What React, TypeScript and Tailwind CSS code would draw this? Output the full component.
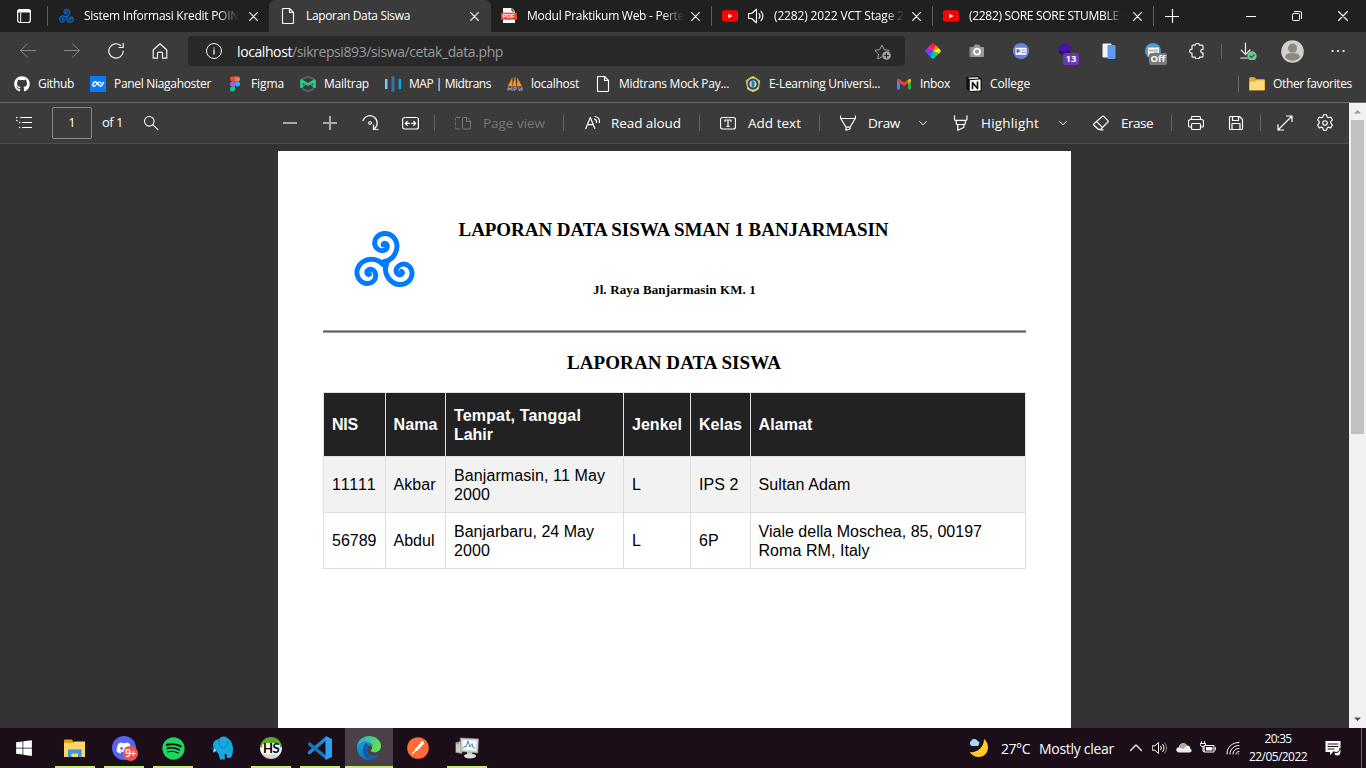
import { useLayoutEffect, useRef } from "react";
import type { ReactNode } from "react";
import { FaGithub, FaWindows, FaSpotify, FaDiscord } from "react-icons/fa";
import { SiPostman } from "react-icons/si";

/* Text that spreads its letters to fill the width given by its class. */
function Fit({ className = "", children }: { className?: string; children: string }) {
  const outer = useRef<HTMLSpanElement>(null);
  const inner = useRef<HTMLSpanElement>(null);
  useLayoutEffect(() => {
    if (!outer.current || !inner.current) return;
    inner.current.style.letterSpacing = "0px";
    const gap = outer.current.getBoundingClientRect().width - inner.current.getBoundingClientRect().width;
    inner.current.style.letterSpacing = `${gap / children.length}px`;
  }, [children]);
  return (
    <span ref={outer} className={`block shrink-0 whitespace-nowrap ${className}`}>
      <span ref={inner} className="inline-block">{children}</span>
    </span>
  );
}

function Icon({ className = "", box = "0 0 16 16", children }: { className?: string; box?: string; children: ReactNode }) {
  return (
    <svg viewBox={box} fill="none" stroke="currentColor" strokeWidth="1" strokeLinecap="round" strokeLinejoin="round" className={`block shrink-0 ${className}`}>
      {children}
    </svg>
  );
}

function Triskelion({ className = "" }: { className?: string }) {
  const arm = "M99 54C99 46 112 48 112 59C111 71 98 73 90 70C73 64 69 45 80 31C91 16 115 16 128 28C146 45 145 71 129 90C122 98 114 102 104 104";
  return (
    <Icon box="12 12 183 172" className={className}>
      <g stroke="#007bff" strokeWidth="15">
        <path d={arm} />
        <path d={arm} transform="rotate(120 104 110)" />
        <path d={arm} transform="rotate(240 104 110)" />
        <path d="M126 95Q112 114 106 137Q98 112 80 98Q105 102 126 95Z" fill="#007bff" strokeWidth="1" />
      </g>
    </Icon>
  );
}

const FileIcon = ({ className = "h-4 w-4" }: { className?: string }) => (
  <Icon className={className}>
    <path d="M2.5 1.5a1 1 0 0 1 1-1H9.500l4 4v10a1 1 0 0 1-1 1h-9a1 1 0 0 1-1-1ZM9.500.5v4h4" strokeWidth="1.15" />
  </Icon>
);

const Close = ({ className = "" }: { className?: string }) => (
  <Icon className={`h-[9px] w-[9px] ${className}`} box="0 0 9 9"><path d="M.7.7l7.600 7.600M8.300.7L.7 8.300" strokeWidth="1.2" /></Icon>
);

const Youtube = () => (
  <Icon className="h-4 w-4">
    <rect x="0" y="2.300" width="16" height="11.500" rx="2.800" fill="#f00" stroke="none" />
    <path d="M6.300 5.700v4.600L10.500 8Z" fill="#fff" stroke="none" />
  </Icon>
);

const Chevron = ({ className = "" }: { className?: string }) => (
  <Icon className={`h-2 w-2 ${className}`} box="0 0 8 8"><path d="M.7 2.500L4 5.800 7.300 2.500" /></Icon>
);

const Rule = ({ className = "" }: { className?: string }) => <span className={`block w-px shrink-0 ${className}`} />;

const fade = "overflow-hidden [mask-image:linear-gradient(to_right,black_86%,transparent)]";

function TabStrip() {
  return (
    <div className="flex h-8 bg-[#202020] text-[12px] leading-8 text-white">
      <div className="flex w-[269px] items-center rounded-br-md">
        <Icon className="ml-4 h-4 w-4"><rect x="1.700" y="1.700" width="12.600" height="12.800" rx="2" strokeWidth="1.200" /><path d="M2 3.700h12M2.300 2.700h11.500" strokeWidth="1.700" /><path d="M4.700 5v9" /></Icon>
        <Rule className="ml-[15px] h-5 bg-[#5c5c5c]" />
        <Triskelion className="ml-[11px] h-[14px] w-[15px] opacity-85" />
        <Fit className={`ml-[10px] w-[155px] ${fade}`}>Sistem Informasi Kredit POIN</Fit>
        <Close className="ml-[10px]" />
      </div>
      <div className="flex w-[222px] items-center rounded-t-md bg-[#3b3b3b]">
        <FileIcon className="ml-[11px] h-4 w-4" />
        <Fit className="ml-[10px] w-[104px]">Laporan Data Siswa</Fit>
        <Close className="ml-[60px]" />
      </div>
      <div className="flex w-[220px] items-center">
        <Icon className="ml-[10px] h-4 w-4">
          <path d="M2 0h9l3 3v12H2Z" fill="#fff" stroke="none" />
          <path d="M11 0v3h3" stroke="#222" />
          <rect x="0" y="4.700" width="16" height="7" fill="#f53b3b" stroke="none" />
          <text x="1.700" y="10.400" fill="#fff" stroke="none" fontSize="6" fontWeight="700" fontFamily="Liberation Sans, sans-serif">PDF</text>
        </Icon>
        <Fit className={`ml-[10px] w-[157px] ${fade}`}>Modul Praktikum Web - Perte</Fit>
        <Close className="ml-[7px]" />
      </div>
      <div className="flex w-[221px] items-center">
        <Rule className="h-5 bg-[#5c5c5c]" />
        <span className="ml-[10px]"><Youtube /></span>
        <Icon className="ml-[10px] h-4 w-4"><path d="M.6 5.500h3L8.500 1.300v13.400l-4.900-4.200h-3ZM11 5.500a4 4 0 0 1 0 5M13 3.300a7 7 0 0 1 0 9.400" strokeWidth="1.150" /></Icon>
        <Fit className={`ml-[10px] w-[130px] ${fade}`}>(2282) 2022 VCT Stage 2</Fit>
        <Close className="ml-[8px]" />
      </div>
      <div className="flex w-[221px] items-center">
        <Rule className="h-5 bg-[#5c5c5c]" />
        <span className="ml-[10px]"><Youtube /></span>
        <Fit className="ml-[10px] w-[161px] overflow-hidden [mask-image:linear-gradient(to_right,black_84%,transparent_96%)]">(2282) SORE SORE STUMBLE G</Fit>
        <Close className="ml-[3px]" />
      </div>
      <div className="flex flex-1 items-center">
        <Rule className="h-5 bg-[#5c5c5c]" />
        <Icon className="ml-[11px] h-[14px] w-[14px]" box="0 0 14 14"><path d="M7.500 0v14M0 7.500h14" strokeWidth="1.200" /></Icon>
        <Icon className="ml-[67px] h-[10px] w-[10px]" box="0 0 10 10"><path d="M0 5.500h10" strokeLinecap="butt" /></Icon>
        <Icon className="ml-[36px] h-[10px] w-[10px]" box="0 0 10 10"><rect x=".5" y="2.500" width="7" height="7" rx="1" /><path d="M2.500.5H8a1.500 1.500 0 0 1 1.500 1.500v5.500" /></Icon>
        <Icon className="ml-[36px] h-[10px] w-[10px]" box="0 0 10 10"><path d="M.5.5l9 9M9.500.5l-9 9" strokeWidth="1.200" /></Icon>
      </div>
    </div>
  );
}

const Cell = ({ children, className = "" }: { children: ReactNode; className?: string }) => (
  <span className={`flex w-11 shrink-0 items-center justify-center ${className}`}>{children}</span>
);

function AddressRow() {
  const wheel = ["#f22", "#f90", "#ee2", "#3d3", "#0cc", "#27f", "#83f", "#f2b"];
  return (
    <div className="flex h-[38px] items-center pl-[6px] text-[#f2f2f2]">
      <Cell className="text-[#858585]"><Icon className="h-4 w-4"><path d="M.5 7.500h15.500M7.500.8L.5 7.500l7 6.700" /></Icon></Cell>
      <Cell className="text-[#858585]"><Icon className="h-4 w-4"><path d="M0 7.500h15.500M8.500.8L15.500 7.500l-7 6.700" /></Icon></Cell>
      <Cell><Icon className="h-4 w-4"><path d="M15.200 8A7.200 7.200 0 1 1 12.700 2.500M15.200.3v4.200h-4.200" strokeWidth="1.200" /></Icon></Cell>
      <Cell><Icon className="h-4 w-4"><path d="M1.200 7L8 .8 14.800 7v8.200h-4.300v-5a1 1 0 0 0-1-1h-3a1 1 0 0 0-1 1v5H1.200Z" strokeWidth="1.200" /></Icon></Cell>
      <div className="ml-[6px] flex h-[30px] w-[717px] items-center rounded bg-[#292929]">
        <Icon className="ml-[18px] h-4 w-4"><circle cx="8" cy="8" r="7.500" /><path d="M8 7v4M8 4.900v.1" strokeWidth="1.300" /></Icon>
        <Fit className="ml-[15px] w-[55px] text-[14px] text-white">localhost</Fit>
        <Fit className="w-[211px] text-[14px] text-[#9a9a9a]">/sikrepsi893/siswa/cetak_data.php</Fit>
        <Icon className="ml-[371px] h-[17px] w-[17px] text-[#a0a0a0]" box="0 0 17 17"><path d="M7.500 14L3.700 16l.8-5L.8 7.400l4.900-.8L8 2l2.200 4.600 5 .8-1 1" /><circle cx="12.500" cy="12.500" r="4.300" fill="#a0a0a0" stroke="none" /><path d="M12.500 10.500v4M10.500 12.500h4" stroke="#292929" strokeWidth="1.200" /></Icon>
      </div>
      <Cell className="ml-[6px]">
        <Icon className="h-4 w-4">
          {wheel.map((c, i) => <path key={c} d={i % 2 ? "M8 8L6 2.500L8 2L10 2.500Z" : "M8 8L5.600 2L8 .2L10.400 2Z"} fill={c} stroke={c} strokeWidth=".4" transform={`rotate(${i * 45} 8 8)`} />)}
        </Icon>
      </Cell>
      <Cell><Icon className="h-4 w-4"><path d="M1.500 4.500h3L6 2h4l1.500 2.500h3v9h-13Z" fill="#999" stroke="#999" /><circle cx="8" cy="8.700" r="3" fill="#999" stroke="#fff" strokeWidth="1.700" /></Icon></Cell>
      <Cell><Icon className="h-4 w-4"><circle cx="8" cy="8" r="8" fill="#6c82d8" stroke="none" /><rect x="2.500" y="4.700" width="11" height="7" rx=".7" fill="#fff" stroke="none" /><path d="M4 6.400v3.400L7 8ZM9 7h3M9 9.500h3" fill="#4863bd" stroke="#4863bd" strokeWidth=".8" /></Icon></Cell>
      <Cell>
        <span className="relative block h-4 w-4">
          <Icon className="h-4 w-4"><path d="M0 5L8 0 16 5 8 10Z" fill="#4a0fb0" stroke="none" /><path d="M1 9l3-2 4 2.500V14ZM8 9.500V14l5-3V7Z" fill="#2a1460" stroke="none" /></Icon>
          <span className="absolute left-[6px] top-[10px] h-3 w-4 rounded-xs bg-[#6837b5] text-center text-[9.5px] font-bold leading-3 text-white">13</span>
        </span>
      </Cell>
      <Cell><Icon className="h-4 w-4"><rect x="1.500" y=".5" width="9" height="14" rx="1" fill="#f4f4f4" stroke="none" /><rect x="6.500" y="2" width="8" height="14" rx="1" fill="#5a9df5" stroke="none" /></Icon></Cell>
      <Cell>
        <span className="relative block h-4 w-4">
          <Icon className="h-4 w-4"><circle cx="8" cy="8" r="8" fill="#4b9bd5" stroke="none" /><rect x="3" y="4.500" width="11" height="8" fill="#fff" stroke="none" /><path d="M4.500 7.500h3" stroke="#f2a33a" strokeWidth="2" /><path d="M9 7h3.500M9 9h3.500" stroke="#55a2d5" /></Icon>
          <span className="absolute left-[4px] top-[10px] h-3 w-[18px] rounded-xs bg-[#7a7a7a] text-center text-[9.5px] font-bold leading-3 text-white">Off</span>
        </span>
      </Cell>
      <Cell><Icon className="h-4 w-4"><path d="M4 2.200h2.200C6.400-.1 10.300-.1 10.500 2.200H13a1 1 0 0 1 1 1v3.200c-3-.6-3 4 0 3.400v3.400a1 1 0 0 1-1 1h-2.500c-.1 2.300-4.100 2.300-4.300 0H4a1 1 0 0 1-1-1v-3C-.2 10.500-.2 6 3 6.200v-3a1 1 0 0 1 1-1Z" strokeWidth="1.200" /></Icon></Cell>
      <Rule className="ml-[2px] h-[15px] bg-[#616161]" />
      <Cell className="ml-[4px]"><Icon className="h-[18px] w-[18px]" box="0 0 18 18"><path d="M6.500 1v11.500M2.200 8.200l4.300 4.300 4.500-4.500M1.800 16h6.500" strokeWidth="1.200" /><circle cx="13" cy="14" r="4.700" fill="#73c991" stroke="none" /><path d="M11 14l1.500 1.500 2.700-2.700" stroke="#245c38" strokeWidth="1.200" /></Icon></Cell>
      <Cell>
        <Icon className="h-[23px] w-[23px]" box="0 0 23 23">
          <circle cx="11.500" cy="11.500" r="11.300" fill="#d3d1ce" stroke="none" />
          <circle cx="11.500" cy="8.200" r="4.600" fill="#8d8a86" stroke="none" />
          <path d="M4.200 17.500C4.200 13.500 7 13.200 11.500 13.200s7.300.3 7.300 4.300a10 10 0 0 1-14.600 0Z" fill="#8d8a86" stroke="none" />
        </Icon>
      </Cell>
      <Cell><Icon className="ml-1 h-4 w-4"><path d="M2.500 8h.1M8 8h.1M13.500 8h.1" strokeWidth="2.200" /></Icon></Cell>
    </div>
  );
}

const Mark = ({ icon, label, className }: { icon: ReactNode; label: string; className: string }) => (
  <span className="flex shrink-0 items-center gap-2">{icon}<Fit className={className}>{label}</Fit></span>
);

function Bookmarks() {
  return (
    <div className="flex h-8 items-center gap-4 border-b border-[#6c6c6c] pb-[5px] pl-[14px] pr-[14px] text-[12px] text-white">
      <Mark icon={<FaGithub className="h-4 w-4" />} label="Github" className="w-9" />
      <Mark icon={<Icon className="h-4 w-4"><rect width="16" height="16" rx="1" fill="#087bff" stroke="none" /><path d="M2.500 9.500C4 4.500 6 5 8 8S11.500 11 13.500 6.500" stroke="#fff" strokeWidth="1.500" /><path d="M3.500 10.500C6 10.500 7 5.500 9.300 5.800c1 .1 1.500 1 2 1.700" stroke="#fff" strokeWidth="1.200" /></Icon>} label="Panel Niagahoster" className="w-[97px]" />
      <Mark icon={<Icon className="h-4 w-4"><path d="M5.500.5H8v5H5.500a2.500 2.500 0 0 1 0-5Z" fill="#f24e1e" stroke="none" /><path d="M8 .5h2.500a2.500 2.500 0 0 1 0 5H8Z" fill="#ff7262" stroke="none" /><path d="M5.500 5.500H8v5H5.500a2.500 2.500 0 0 1 0-5Z" fill="#a259ff" stroke="none" /><circle cx="10.500" cy="8" r="2.500" fill="#1abcfe" stroke="none" /><path d="M5.500 10.500H8V13a2.500 2.500 0 1 1-2.500-2.500Z" fill="#0acf83" stroke="none" /></Icon>} label="Figma" className="w-[33px]" />
      <Mark icon={<Icon className="h-4 w-4"><path d="M2.500 3L8 .8 13.500 3M2.500 13L8 15.200 13.500 13" stroke="#566078" strokeWidth="1.800" /><path d="M1.500 12V4.500L8 8.500l6.500-4V12" stroke="#22d18b" strokeWidth="2.600" strokeLinecap="butt" /><path d="M1.500 11l3-2M14.500 11l-3-2" stroke="#22d18b" strokeWidth="1.500" /></Icon>} label="Mailtrap" className="w-[45px]" />
      <Mark icon={<Icon className="h-4 w-4"><path d="M1.200 3v10" stroke="#8ac4e7" strokeWidth="2.500" strokeLinecap="butt" /><path d="M8 .5v15" stroke="#3274ae" strokeWidth="3" strokeLinecap="butt" /><path d="M14.800 3v10" stroke="#08a9df" strokeWidth="2.500" strokeLinecap="butt" /></Icon>} label="MAP | Midtrans" className="w-[82px]" />
      <Mark icon={<Icon className="h-4 w-4"><path d="M1 10L5.200 2v8ZM5.500 10L8.200 1l1 9ZM10 10l.5-8 4 8Z" fill="#f89a25" stroke="#d98015" strokeWidth=".5" /><path d="M1 14.500v-3l2 2 2-2v3M7 14.500v-3h2v2H7M11.500 11.500l1 3 2.500-3v3" stroke="#8991bd" strokeWidth="1.200" /></Icon>} label="localhost" className="w-[48px]" />
      <Mark icon={<FileIcon />} label="Midtrans Mock Pay..." className="w-[110px]" />
      <Mark icon={<Icon className="h-4 w-4"><path d="M8 .3l6.800 4.600-1.500 8.300-5.300 2.500-5.300-2.500L1.200 4.900Z" fill="#e7df39" stroke="#c8c65a" strokeWidth="1" /><circle cx="8" cy="8" r="4.500" fill="#c8d8e8" stroke="#253d95" strokeWidth="2" /><path d="M8 6.500v3" stroke="#248a5a" strokeWidth="3" /></Icon>} label="E-Learning Universi..." className="w-[111px]" />
      <Mark icon={<Icon className="h-4 w-4"><path d="M1 4l3 2.200v7.300H2a1 1 0 0 1-1-1Z" fill="#4285f4" stroke="none" /><path d="M12 6.200L15 4v8.500a1 1 0 0 1-1 1h-2Z" fill="#34a853" stroke="none" /><path d="M2.500 4.200L8 8.300l5.500-4.100" stroke="#ea4335" strokeWidth="2.900" /><path d="M12 4.200l1-1c1-.7 2 0 2 1v1l-3 2.200Z" fill="#fbbc04" stroke="none" /></Icon>} label="Inbox" className="w-[30px]" />
      <Mark icon={<Icon className="h-4 w-4"><path d="M.3 1L12 .3l3.700 2.500v12.700l-12 .3L.3 12.500Z" fill="#111" stroke="none" /><path d="M3.800 4.200l10.700-.6v10.800l-10.700.5ZM2 1.800l9.500-.5 1.500 1.200-9.300.4Z" fill="#fff" stroke="none" /><path d="M6.500 12.500v-6l5 6v-6.500" stroke="#111" strokeWidth="1.700" /></Icon>} label="College" className="w-10" />
      <Rule className="ml-auto mr-[-6px] h-4 bg-[#696969]" />
      <Mark icon={<Icon className="h-4 w-4"><path d="M.5 2.500a1 1 0 0 1 1-1h4l1.500 2h7.500a1 1 0 0 1 1 1v9h-15Z" fill="#e5ad25" stroke="#d49b15" /><path d="M.5 5.500H6l1.500-1.300h8v10H.5Z" fill="#ffdc79" stroke="#e4b94c" strokeWidth=".5" /></Icon>} label="Other favorites" className="w-[79px]" />
    </div>
  );
}

function PdfBar() {
  const rule = "h-4 bg-[#646464]";
  const text = "text-[13.5px]";
  return (
    <div className="flex h-[41px] shrink-0 items-center border-b border-[#4e4e4e] bg-[#3b3b3b] text-white">
      <Icon className="ml-4 h-4 w-4"><path d="M4.500 2.500H16M6.500 7.500H16M6.500 12.500H16" strokeWidth="1.200" /><path d="M.8 2.500h.1M.8 5.500h.1M3.500 7.500h.1M3.500 12.500h.1" strokeWidth="1.500" /></Icon>
      <span className="ml-5 flex h-8 w-10 items-center justify-center rounded-xs border border-[#8a8a8a] text-[13px]">1</span>
      <Fit className="ml-[10px] w-[21px] text-[13px]">of 1</Fit>
      <Icon className="ml-[20px] h-4 w-4"><circle cx="6.300" cy="6.300" r="4.800" strokeWidth="1.100" /><path d="M9.900 9.900l5 4.700" strokeWidth="1.200" /></Icon>
      <Icon className="ml-[124px] h-[14px] w-[14px] text-[#aaa]" box="0 0 14 14"><path d="M0 7h14" strokeWidth="2" strokeLinecap="butt" /></Icon>
      <Icon className="ml-[26px] h-[14px] w-[14px] text-[#aaa]" box="0 0 14 14"><path d="M0 7h14M7 0v14" strokeWidth="2" strokeLinecap="butt" /></Icon>
      <Icon className="ml-[25px] h-[18px] w-[17px]" box="0 0 17 18"><path d="M1 6.500A7.300 7.300 0 1 1 12 15M11.500 11v4.500h4.500" strokeWidth="1.200" /><circle cx="8" cy="9" r="1.500" /></Icon>
      <Icon className="ml-[23px] h-4 w-[17px]" box="0 0 17 16"><rect x=".6" y="2.500" width="15.800" height="11.500" rx="2" strokeWidth="1.200" /><path d="M3.500 8.300h3.800M9.700 8.300h3.800M5.300 6.300l-2 2 2 2M11.700 6.300l2 2-2 2" strokeWidth="1.200" /></Icon>
      <Rule className={`ml-[15px] ${rule}`} />
      <Icon className="ml-5 h-4 w-4 text-[#777]"><path d="M7.500 3.500a1 1 0 0 1 1-1h3.500l3.500 3.500v7a1 1 0 0 1-1 1h-6a1 1 0 0 1-1-1ZM11.500 3v3.500h4M5 2.500H1.700A1.200 1.200 0 0 0 .5 3.700v1.500M.5 7.500v2M.5 11.700v1a1.300 1.300 0 0 0 1.200 1.300H5" /></Icon>
      <Fit className={`ml-[12px] w-[62px] text-[#777] ${text}`}>Page view</Fit>
      <Rule className={`ml-[18px] ${rule}`} />
      <Icon className="ml-[21px] h-4 w-4"><path d="M.8 13.500L5.300 2.500 9.800 13.500M2.500 9.700h5.700M9.500 4a3.300 3.300 0 0 1 2 3.500M10 1.500c3 .5 4.700 3 4.500 6" strokeWidth="1.200" /></Icon>
      <Fit className={`ml-[10px] w-[70px] ${text}`}>Read aloud</Fit>
      <Rule className={`ml-[18px] ${rule}`} />
      <Icon className="ml-[20px] h-4 w-4"><rect x=".5" y="2.500" width="15" height="11.500" rx="2" strokeWidth="1.200" /><path d="M5 6.300v-1.300h6v1.300M8 5v6.500M6.800 11.500h2.400" strokeWidth="1.200" /></Icon>
      <Fit className={`ml-[12px] w-[53px] ${text}`}>Add text</Fit>
      <Rule className={`ml-[18px] ${rule}`} />
      <Icon className="ml-[20px] h-4 w-4"><path d="M.5 1v2L6 12.200h4L15.500 3V1M1 3.500h14M6 12.200v3l4-1.200v-1.800" strokeWidth="1.200" /></Icon>
      <Fit className={`ml-[12px] w-8 ${text}`}>Draw</Fit>
      <Chevron className="ml-[19px]" />
      <Icon className="ml-[26px] h-4 w-4"><path d="M1.500.8v3.500a1 1 0 0 0 1 1h10.500a1 1 0 0 0 1-1V.8M3.300 5.500v3a1 1 0 0 0 1 1h7a1 1 0 0 0 1-1v-3M4.800 9.700v5.500l6-2.700V9.700" strokeWidth="1.200" /></Icon>
      <Fit className={`ml-[12px] w-[58px] ${text}`}>Highlight</Fit>
      <Chevron className="ml-[20px]" />
      <Icon className="ml-[26px] h-4 w-4"><path d="M9.300 1.400a1 1 0 0 1 1.400 0l4.200 4.200a1 1 0 0 1 0 1.400l-7.200 7.300H5.200L1 10.200a1 1 0 0 1 0-1.400ZM3.700 6.600l5.700 5.700M7.500 14.800H10" strokeWidth="1.200" /></Icon>
      <Fit className={`ml-[12px] w-8 ${text}`}>Erase</Fit>
      <Rule className={`ml-[18px] ${rule}`} />
      <Icon className="ml-[16px] h-4 w-4"><path d="M3.500 4.500v-2a1 1 0 0 1 1-1h7a1 1 0 0 1 1 1v2M3.500 12H2a1.500 1.500 0 0 1-1.500-1.500v-4a2 2 0 0 1 2-2h11a2 2 0 0 1 2 2v4A1.500 1.500 0 0 1 14 12h-1.500" strokeWidth="1.200" /><rect x="3.500" y="8.500" width="9" height="6" rx="1" strokeWidth="1.200" /></Icon>
      <Icon className="ml-[24px] h-4 w-4"><path d="M1.500 2.500a1 1 0 0 1 1-1h9l3 3v9a1 1 0 0 1-1 1h-11a1 1 0 0 1-1-1ZM4.500 1.500v4h6v-4M4 14.500v-6h8v6" strokeWidth="1.200" /></Icon>
      <Rule className={`ml-[16px] ${rule}`} />
      <Icon className="ml-[16px] h-4 w-4"><path d="M1 15l14-14M9.500 1H15v5.500M1 9.500V15h5.500" strokeWidth="1.200" /></Icon>
      <Icon className="ml-[23px] h-[18px] w-[18px]"><circle cx="8" cy="8" r="2" /><path d="M6.600.7h2.800l.5 2 1.200.7 2-.7 1.500 2.500-1.500 1.600v1.400l1.500 1.600-1.500 2.500-2-.6-1.200.7-.5 2H6.600l-.5-2-1.200-.7-2 .6L1.400 9.800l1.500-1.600V6.800L1.400 5.200l1.500-2.500 2 .7 1.200-.7Z" /></Icon>
    </div>
  );
}

const rows = [
  ["11111", "Akbar", "Banjarmasin, 11 May", "2000", "L", "IPS 2", "Sultan Adam", ""],
  ["56789", "Abdul", "Banjarbaru, 24 May", "2000", "L", "6P", "Viale della Moschea, 85, 00197", "Roma RM, Italy"],
];
const widths = [
  ["w-[44.5px]", "w-[42px]", "w-[151px]", "w-9", "w-[9px]", "w-[39.5px]", "w-[92px]", "w-0"],
  ["w-[44.5px]", "w-[41px]", "w-[140px]", "w-9", "w-[9px]", "w-5", "w-[223.5px]", "w-[111px]"],
];

function Sheet() {
  const grid = "grid grid-cols-[61.5px_60.5px_178px_67px_59.5px_275px] [&>div]:flex [&>div]:flex-col [&>div]:justify-center [&>div]:border-r [&>div]:border-b [&>div]:pl-2";
  return (
    <main className="h-[577px] w-[793px] bg-white px-[45px] text-black [font-family:'Liberation_Sans',sans-serif]">
      <header className="flex h-[179px] font-bold [font-family:'Liberation_Serif',serif]">
        <Triskelion className="ml-[31px] mt-[80px] h-[57px] w-[61px]" />
        <div className="flex flex-col">
          <Fit className="ml-[43.5px] mt-[67px] w-[430px] text-[19px] leading-6">LAPORAN DATA SISWA SMAN 1 BANJARMASIN</Fit>
          <Fit className="ml-[178px] mt-[40px] w-[163px] text-[13px] leading-4">Jl. Raya Banjarmasin KM. 1</Fit>
        </div>
      </header>
      <div className="h-[3px] w-[703px] border-y border-[#a0a0a0] bg-[#5e5e5e]" />
      <Fit className="ml-[244px] mt-[18px] w-[214px] text-[19px] font-bold leading-6 [font-family:'Liberation_Serif',serif]">LAPORAN DATA SISWA</Fit>
      <section className="mt-[17px] w-[703px] border-l border-t border-[#dee2e6] text-[16px] leading-[19px]">
        <div className={`${grid} h-16 bg-[#222] font-bold text-white [&>div]:border-[#dee2e6]`}>
          <div><Fit className="w-[26px]">NIS</Fit></div>
          <div><Fit className="w-[44px]">Nama</Fit></div>
          <div><Fit className="w-[127px]">Tempat, Tanggal</Fit><Fit className="w-[39px]">Lahir</Fit></div>
          <div><Fit className="w-[50px]">Jenkel</Fit></div>
          <div><Fit className="w-[43px]">Kelas</Fit></div>
          <div><Fit className="w-[54px]">Alamat</Fit></div>
        </div>
        {rows.map((r, i) => (
          <div key={r[0]} className={`${grid} h-14 [&>div]:border-[#dedede] ${i === 0 ? "bg-[#f2f2f2]" : "bg-white"}`}>
            <div><Fit className={widths[i][0]}>{r[0]}</Fit></div>
            <div><Fit className={widths[i][1]}>{r[1]}</Fit></div>
            <div><Fit className={widths[i][2]}>{r[2]}</Fit><Fit className={widths[i][3]}>{r[3]}</Fit></div>
            <div><Fit className={widths[i][4]}>{r[4]}</Fit></div>
            <div><Fit className={widths[i][5]}>{r[5]}</Fit></div>
            <div><Fit className={widths[i][6]}>{r[6]}</Fit>{r[7] && <Fit className={widths[i][7]}>{r[7]}</Fit>}</div>
          </div>
        ))}
      </section>
    </main>
  );
}

const Task = ({ children, open = false, active = false }: { children: ReactNode; open?: boolean; active?: boolean }) => (
  <span className={`flex h-10 w-12 shrink-0 flex-col items-center ${active ? "bg-[#4b4048]" : ""}`}>
    <span className="flex h-[38px] items-center pt-[2px]">{children}</span>
    <span className={`h-[2px] ${active ? "w-12" : "w-10"} ${open ? "bg-[#c0ef70]" : ""}`} />
  </span>
);

function Taskbar() {
  return (
    <footer className="flex h-10 items-center bg-[#1b0e19] text-white">
      <span className="flex w-12 justify-center"><FaWindows className="h-[18px] w-[18px]" /></span>
      <div className="ml-[3px] flex gap-px">
        <Task open><Icon className="h-6 w-6" box="0 0 24 24"><path d="M1 4.500a1 1 0 0 1 1-1h7l1.500 2.500H22v5H1Z" fill="#e5a50d" stroke="none" /><path d="M1 7h9l1.500-1.500H22V21H1Z" fill="#ffd567" stroke="none" /><path d="M5 21v-7.500h13.500V21H15v-3.500H8.500V21Z" fill="#3a96dd" stroke="none" /></Icon></Task>
        <Task open>
          <span className="relative block h-6 w-6 rounded-full bg-[#5865f2]">
            <FaDiscord className="ml-1 mt-1 h-4 w-4" />
            <span className="absolute left-[11px] top-[10px] h-[15px] w-[15px] rounded-full bg-[#ed5353] text-center text-[10.5px] font-semibold leading-[14px] tracking-[-0.5px]">9+</span>
          </span>
        </Task>
        <Task open><FaSpotify className="h-[23px] w-[23px] text-[#1ed760]" /></Task>
        <Task><Icon className="h-6 w-6" box="0 0 24 24"><path d="M3.500 12C2 7 4.500 3.500 9 3c1.500-3 6.500-3.500 9-.5 3 2 5 6 5 10.500 0 4-1 7.500-2.500 9h-3.500l-.5-4h-2l.5 5.500h-5L9 19 6.500 15 3.500 17Z" fill="#16a9df" stroke="none" /><path d="M10 3c-2 3-1 7 2 8.500 4 1 6-2 5.500-6M3.500 11c0 2-1.500 2.500-3 1" stroke="#0877ad" strokeWidth=".8" /><path d="M4.500 12.500L3 15.500l3-.5" fill="#d8f4ff" stroke="none" /></Icon></Task>
        <Task open>
          <span className="flex h-[22px] w-[22px] items-center justify-center rounded-full bg-[linear-gradient(#5aa928_0_45%,#fff_50%,#ccc)]">
            <span className="rounded bg-white px-px text-[13px] font-bold leading-[11px] tracking-[-0.5px] text-black [font-family:Lato,sans-serif]">HS</span>
          </span>
        </Task>
        <Task open><Icon className="h-6 w-6" box="0 0 24 24"><path d="M1.500 16.500L18 2.500" stroke="#1f8ad0" strokeWidth="3.500" /><path d="M1.500 8L18 21.500" stroke="#1677b8" strokeWidth="3.500" /><path d="M17.500 0L24 3v18l-6.500 3Z" fill="#2ba0ee" stroke="none" /></Icon></Task>
        <Task open active>
          <svg viewBox="0 0 24 24" className="h-6 w-6">
            <defs>
              <linearGradient id="sea" x1="0" y1="0" x2="1" y2=".4"><stop stopColor="#28a9e0" /><stop offset="1" stopColor="#62e04e" /></linearGradient>
              <linearGradient id="deep" x1="0" y1="0" x2="1" y2="1"><stop stopColor="#1b9de2" /><stop offset="1" stopColor="#0c59a4" /></linearGradient>
            </defs>
            <path d="M0 11.500C0 5 5.500 0 12 0c7 0 12 4.500 12 10 0 4-3 6.300-6.500 6.300-3 0-4.300-1.200-3.300-2.300 1.800-2 .8-5.500-3.700-6C6 7.500 2 8.500 0 11.500Z" fill="url(#sea)" />
            <path d="M0 11.500C2 5.500 8 5 11 6c3 .8 4.700 3 4.500 5-2-2.500-5.500-1-5.500 3 0 4.500 5 7.500 10.500 4.800.8-.5 1.500 0 1 .7C17 25 8 25.500 3 20 1 18 0 15 0 11.500Z" fill="url(#deep)" />
            <path d="M9 7C5 10 5 18 9 21.500c3 2.300 7 2.500 10 .7C13 22 9.500 18 10 13.500c0-1.500 1-2.500 2-3.500Z" fill="#135ba5" />
          </svg>
        </Task>
        <Task><Icon className="h-[22px] w-[22px]" box="0 0 22 22"><circle cx="11" cy="11" r="10.800" fill="#ff6c37" stroke="none" /><circle cx="15.200" cy="6" r="1.900" fill="#fff" stroke="none" /><path d="M13.500 8.200L9.500 12.500" stroke="#fff" strokeWidth="2.800" /><path d="M9 13L5.500 16.500" stroke="#fff" strokeWidth="1.200" /></Icon></Task>
        <Task open><Icon className="h-6 w-6" box="0 0 24 24"><path d="M1 6.500l6-1v12l-6-1Z" fill="#c9ccc7" stroke="#888" strokeWidth=".6" /><path d="M2 7.500h1.500" stroke="#5fc42a" strokeWidth="1.500" /><path d="M5.500 2l18 1-.7 14-16.300-1.500Z" fill="#d5d6d3" stroke="#9b9b9b" strokeWidth=".7" /><path d="M7.500 4.200l13.800.6-.5 9.700-12.500-1Z" fill="#fff" stroke="none" /><path d="M8.500 12l1.500-2 1 1 2-6 2 6 2-3.500 1 4 2 .5" stroke="#3a8ec0" /><path d="M12 16h5v3h-5Z" fill="#bbb" stroke="none" /><ellipse cx="15" cy="20" rx="6" ry="2.500" fill="#ddd" stroke="none" /></Icon></Task>
      </div>
      <Icon className="ml-[478px] h-5 w-5" box="0 0 20 20"><path d="M15 1c6 5 5 14-1 17C8.500 20.500 3 18 .8 14 7 15 15 10 15 1Z" fill="#ffc928" stroke="none" /><path d="M3 8a3 3 0 0 1-.5-5.500C4 0 8 1 8.500 3c2.500 0 2.500 4.500-.3 5Z" fill="#a7d8f5" stroke="none" /></Icon>
      <Fit className="ml-[12px] w-[29px] text-[14px]">27°C</Fit>
      <Fit className="ml-[9px] w-[75px] text-[14px]">Mostly clear</Fit>
      <Icon className="ml-[16px] h-3 w-3" box="0 0 12 12"><path d="M.5 8.500L6 3l5.500 5.500" strokeWidth="1.200" /></Icon>
      <Icon className="ml-[10px] h-4 w-4"><path d="M.6 5.800h2.300L6.500 2.500v11L2.900 10.200H.6ZM8.700 6a3 3 0 0 1 0 4M10.700 4.300a6 6 0 0 1 0 7.400" /><path d="M12.800 2.800a8 8 0 0 1 0 10.400" stroke="#888" /></Icon>
      <Icon className="ml-[8px] h-4 w-4"><path d="M3.500 12.500C-1 12.500-.5 7.200 3 7.200 3.500 3 9 2 11 5.500c3 0 3.500 2 3 3 2.500 1 2 4-.5 4Z" fill="#eee" stroke="none" /><path d="M3 7.200C3.500 3 9 2 11 5.500L7 9Z" fill="#aaa" stroke="none" /></Icon>
      <Icon className="ml-[8px] h-4 w-4"><rect x="4.500" y="5.500" width="9.500" height="6.500" /><rect x="6" y="7" width="6.500" height="3.500" fill="#fff" stroke="none" /><path d="M15.300 7.500v2.500M1.500 1.500v2M4.500 1.500v2M.5 3.500h5v2l-1.500 1H2l-1.500-1ZM3 6.500v4.800h1.500" /></Icon>
      <Icon className="ml-[10px] h-[14px] w-[14px]" box="0 0 14 14"><path d="M1 13C1 6 6 1.500 13 1.500M4 13c0-5 4-8.500 9-8.500M7 13c0-3.500 3-5.500 6-5.500M10 13c0-1.500 1.500-2.500 3-2.500M12.500 13h.2" /></Icon>
      <div className="ml-[9px] flex w-[58px] flex-col items-center text-[12px] leading-[18px]">
        <Fit className="w-[27px]">20:35</Fit>
        <Fit className="w-[58px]">22/05/2022</Fit>
      </div>
      <Icon className="ml-[18px] h-[17px] w-[17px]" box="0 0 17 17"><path d="M.5 1h15v11H8l-3 3v-3H.5Z" fill="#fff" stroke="none" /><path d="M3 4h10M3 6.500h10M3 9h6" stroke="#1b0e19" /><path d="M9 12a4 4 0 0 0 6-4c2 3 1 8-3 8-2 0-3-2-3-4Z" fill="#fff" stroke="#1b0e19" /></Icon>
      <Rule className="ml-[19px] h-10 bg-[#6c636b]" />
    </footer>
  );
}

export default function App() {
  return (
    <div className="flex h-[768px] w-[1366px] flex-col overflow-hidden bg-[#3b3b3b] [font-family:'Open_Sans','Noto_Sans',sans-serif]">
      <TabStrip />
      <AddressRow />
      <div className="flex h-[33px] flex-col justify-end"><Bookmarks /></div>
      <div className="flex h-[625px] bg-[#333]">
        <div className="flex w-[1349px] flex-col">
          <PdfBar />
          <div className="pl-[278px] pt-[7px]"><Sheet /></div>
        </div>
        <aside className="flex w-[17px] flex-col items-center bg-[#f1f1f1]">
          <span className="flex h-[17px] items-center"><Icon className="h-[7px] w-[7px]" box="0 0 7 7"><path d="M0 5.500L3.500 2 7 5.500Z" fill="#999" stroke="none" /></Icon></span>
          <span className="h-[314px] w-[13px] bg-[#c1c1c1]" />
          <span className="mt-auto flex h-[17px] items-center"><Icon className="h-[7px] w-[7px]" box="0 0 7 7"><path d="M0 1.500L3.500 5 7 1.500Z" fill="#505050" stroke="none" /></Icon></span>
        </aside>
      </div>
      <Taskbar />
    </div>
  );
}
